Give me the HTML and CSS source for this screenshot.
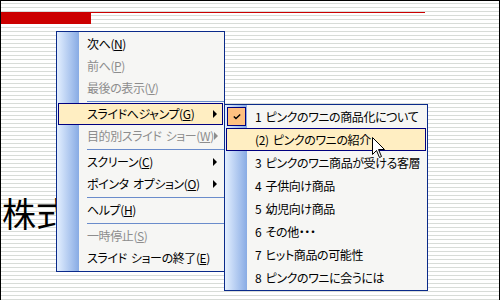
FILE: index.html
```html
<!DOCTYPE html>
<html lang="ja">
<head>
<meta charset="utf-8">
<title>スライド ショー メニュー</title>
<link rel="stylesheet" href="styles.css">
</head>
<body>
  <div class="slide-header">
    <div class="red-block"></div>
    <div class="red-line"></div>
  </div>
  <h1 class="slide-title">株式</h1>

  <div class="menu main-menu">
    <div class="item"><span class="icon"></span><span class="label">次へ(<u>N</u>)</span></div>
    <div class="item disabled"><span class="icon"></span><span class="label">前へ(<u>P</u>)</span></div>
    <div class="item disabled"><span class="icon"></span><span class="label">最後の表示(<u>V</u>)</span></div>
    <div class="sep"></div>
    <div class="item hot"><span class="icon"></span><span class="label">スライドへジャンプ(<u>G</u>)</span><span class="arrow"></span></div>
    <div class="item disabled"><span class="icon"></span><span class="label">目的別スライド ショー(<u>W</u>)</span><span class="arrow"></span></div>
    <div class="sep"></div>
    <div class="item"><span class="icon"></span><span class="label">スクリーン(<u>C</u>)</span><span class="arrow"></span></div>
    <div class="item"><span class="icon"></span><span class="label">ポインタ オプション(<u>O</u>)</span><span class="arrow"></span></div>
    <div class="sep"></div>
    <div class="item"><span class="icon"></span><span class="label">ヘルプ(<u>H</u>)</span></div>
    <div class="sep"></div>
    <div class="item disabled"><span class="icon"></span><span class="label">一時停止(<u>S</u>)</span></div>
    <div class="item"><span class="icon"></span><span class="label">スライド ショーの終了(<u>E</u>)</span></div>
  </div>

  <div class="menu sub-menu">
    <div class="item"><span class="icon checked"><svg width="8" height="6" viewBox="0 0 8 6"><path d="M0.8 2.4 L3 4.6 L7.2 0.6" stroke="#000" stroke-width="1.4" fill="none"/></svg></span><span class="label">1 ピンクのワニの商品化について</span></div>
    <div class="item hot"><span class="icon"></span><span class="label">(2) ピンクのワニの紹介</span></div>
    <div class="item"><span class="icon"></span><span class="label">3 ピンクのワニ商品が受ける客層</span></div>
    <div class="item"><span class="icon"></span><span class="label">4 子供向け商品</span></div>
    <div class="item"><span class="icon"></span><span class="label">5 幼児向け商品</span></div>
    <div class="item"><span class="icon"></span><span class="label">6 その他・・・</span></div>
    <div class="item"><span class="icon"></span><span class="label">7 ヒット商品の可能性</span></div>
    <div class="item"><span class="icon"></span><span class="label">8 ピンクのワニに会うには</span></div>
  </div>

  <svg class="cursor" width="14" height="22" viewBox="0 0 14 22">
    <path d="M0.5 0.5 L0.5 17.5 L4.5 13.5 L7.5 20.5 L9.5 19.5 L6.5 12.5 L12.5 12.5 Z" fill="#fff" stroke="#000" stroke-width="1" stroke-linejoin="miter"/>
  </svg>
</body>
</html>
```

FILE: styles.css
```css
html, body {
  margin: 0;
  padding: 0;
}

body {
  position: relative;
  width: 500px;
  height: 300px;
  box-sizing: border-box;
  border: 1px solid #000;
  border-bottom: none;
  overflow: hidden;
  background: repeating-linear-gradient(to bottom, #ffffff 0 3px, #d8dcd8 3px 4px);
  font-family: "Noto Sans CJK JP", sans-serif;
}

.slide-header {
  display: flex;
  align-items: flex-start;
  margin-top: 11px;
}

.red-block {
  width: 90px;
  height: 12px;
  background: #cc0000;
}

.red-line {
  width: 334px;
  height: 1px;
  background: #cc0000;
}

.slide-title {
  margin: 172px 0 0 1px;
  font-size: 34px;
  line-height: 34px;
  font-weight: 400;
  color: #000;
  white-space: nowrap;
}

.menu {
  position: absolute;
  box-sizing: border-box;
  border: 1px solid #0a2a8a;
  background: linear-gradient(to right, #e3efff, #88abe4) 0 0 / 22px 100% no-repeat, #f6f6f4;
  font-size: 12px;
  font-feature-settings: "palt" 1;
  letter-spacing: -0.4px;
  word-spacing: 2px;
  color: #000;
}

.main-menu {
  left: 55px;
  top: 30px;
  width: 169px;
  padding: 1px 0 2px;
}

.sub-menu {
  left: 223px;
  top: 103px;
  width: 204px;
  padding: 0 0 1px;
}

.item {
  display: flex;
  align-items: center;
  height: 22px;
  margin: 0 1px;
  box-sizing: border-box;
  border: 1px solid transparent;
  white-space: nowrap;
}

.sub-menu .item {
  height: 23px;
}

.item.hot {
  border-color: #000080;
  background: #ffeec2;
}

.item.disabled {
  color: #8d8d8d;
}

.icon {
  flex: none;
  width: 19px;
  height: 19px;
  box-sizing: border-box;
  margin-right: 9px;
}

.icon.checked {
  display: flex;
  align-items: center;
  justify-content: center;
  border: 1px solid #000080;
  background: #ffc080;
}

.label {
  line-height: 14px;
}

.label u {
  text-decoration: underline;
  text-underline-offset: 1px;
}

.arrow {
  margin-left: auto;
  margin-right: 5px;
  width: 0;
  height: 0;
  border-left: 4px solid currentColor;
  border-top: 4px solid transparent;
  border-bottom: 4px solid transparent;
}

.sep {
  height: 1px;
  background: #6a8ccb;
  margin: 2px 0 1px 30px;
}

.cursor {
  position: absolute;
  left: 371px;
  top: 136px;
}
```
